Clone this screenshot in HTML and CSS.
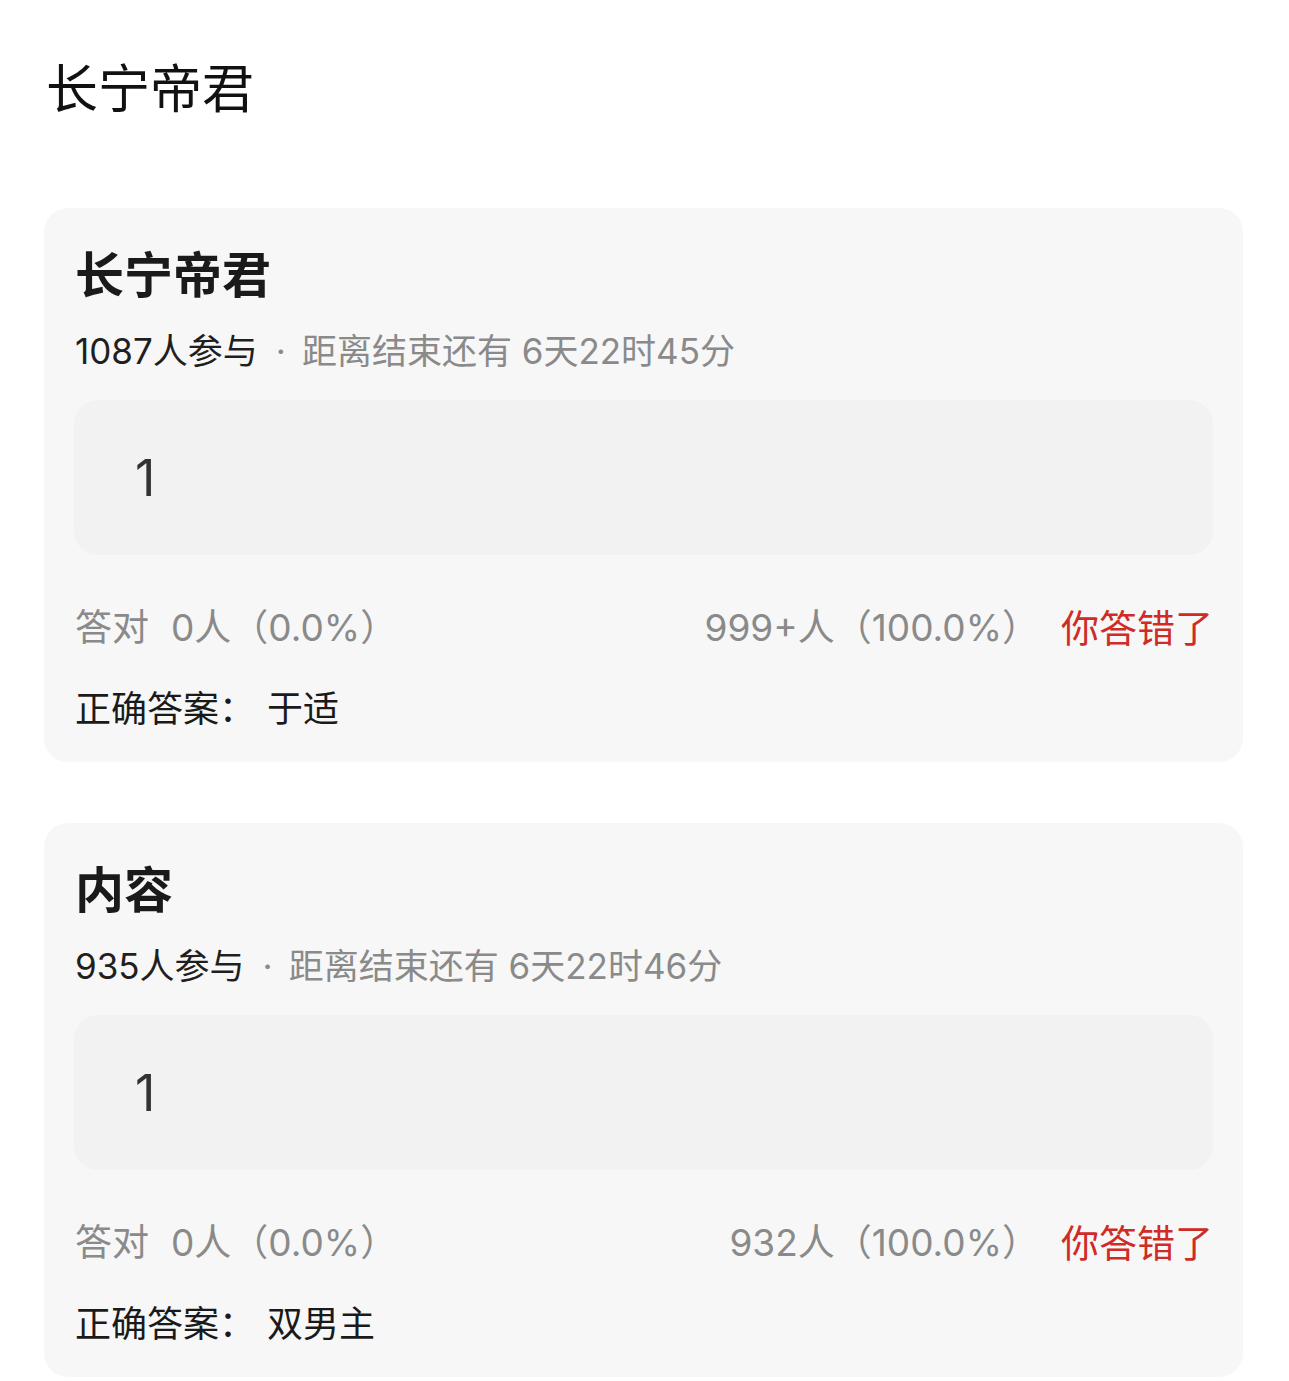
FILE: index.html
```html
<!DOCTYPE html>
<html lang="zh-CN">
<head>
<meta charset="utf-8">
<title>长宁帝君</title>
<link rel="stylesheet" href="styles.css">
</head>
<body>
<header class="page-head">
  <h1 class="page-title">长宁帝君</h1>
</header>
<main class="list">
  <section class="card">
    <h2 class="card-title">长宁帝君</h2>
    <p class="meta"><span class="meta-count">1087人参与</span><span class="meta-rest"><span class="dot">·</span>距离结束还有 6天22时45分</span></p>
    <div class="answer-box">1</div>
    <div class="stats">
      <div class="stats-left"><span>答对</span><span class="gap">0人（0.0%）</span></div>
      <div class="stats-right"><span>999+人（100.0%）</span><span class="wrong">你答错了</span></div>
    </div>
    <p class="correct">正确答案：<span class="correct-value">于适</span></p>
  </section>
  <section class="card">
    <h2 class="card-title">内容</h2>
    <p class="meta"><span class="meta-count">935人参与</span><span class="meta-rest"><span class="dot">·</span>距离结束还有 6天22时46分</span></p>
    <div class="answer-box">1</div>
    <div class="stats">
      <div class="stats-left"><span>答对</span><span class="gap">0人（0.0%）</span></div>
      <div class="stats-right"><span>932人（100.0%）</span><span class="wrong">你答错了</span></div>
    </div>
    <p class="correct">正确答案：<span class="correct-value">双男主</span></p>
  </section>
</main>
</body>
</html>
```

FILE: styles.css
```css
* { box-sizing: border-box; }
html, body { margin: 0; padding: 0; }
body {
  background: #ffffff;
  font-family: Inter, "Noto Sans CJK SC", "Noto Sans", sans-serif;
  color: #1a1a1a;
  width: 1289px;
}
.page-head {
  padding: 52px 0 0 46px;
  height: 208px;
}
.page-title {
  margin: 0;
  font-size: 52px;
  line-height: 76px;
  font-weight: 400;
  color: #111;
}
.list {
  display: flex;
  flex-direction: column;
  gap: 61px;
  padding: 0 46px 0 44px;
}
.card {
  background: #f7f7f7;
  border-radius: 24px;
  padding: 32px 30px 26px 30px;
}
.card-title {
  margin: 0;
  font-size: 49px;
  line-height: 72px;
  font-weight: 700;
  color: #1a1a1a;
  padding-left: 1px;
}
.meta {
  margin: 13px 0 0 0;
  font-size: 35px;
  line-height: 52px;
  padding-left: 1px;
}
.meta-count { color: #1f1f1f; }
.meta-rest { color: #8a8a8a; }
.dot { margin: 0 16px 0 18px; }
.answer-box {
  margin-top: 23px;
  height: 155px;
  background: #f2f2f2;
  border-radius: 24px;
  display: flex;
  align-items: center;
  padding-left: 61px;
  font-size: 50px;
  color: #333;
}
.stats {
  margin-top: 46px;
  display: flex;
  justify-content: space-between;
  font-size: 37px;
  line-height: 54px;
  color: #8a8a8a;
}
.stats-left { padding-left: 1px; }
.gap { margin-left: 22px; }
.stats-right { display: flex; }
.wrong {
  color: #cf2b27;
  margin-left: 22px;
  font-size: 38px;
}
.correct {
  margin: 27px 0 0 0;
  font-size: 36px;
  line-height: 54px;
  color: #1a1a1a;
  padding-left: 1px;
}
.correct-value { margin-left: 12px; }
```
